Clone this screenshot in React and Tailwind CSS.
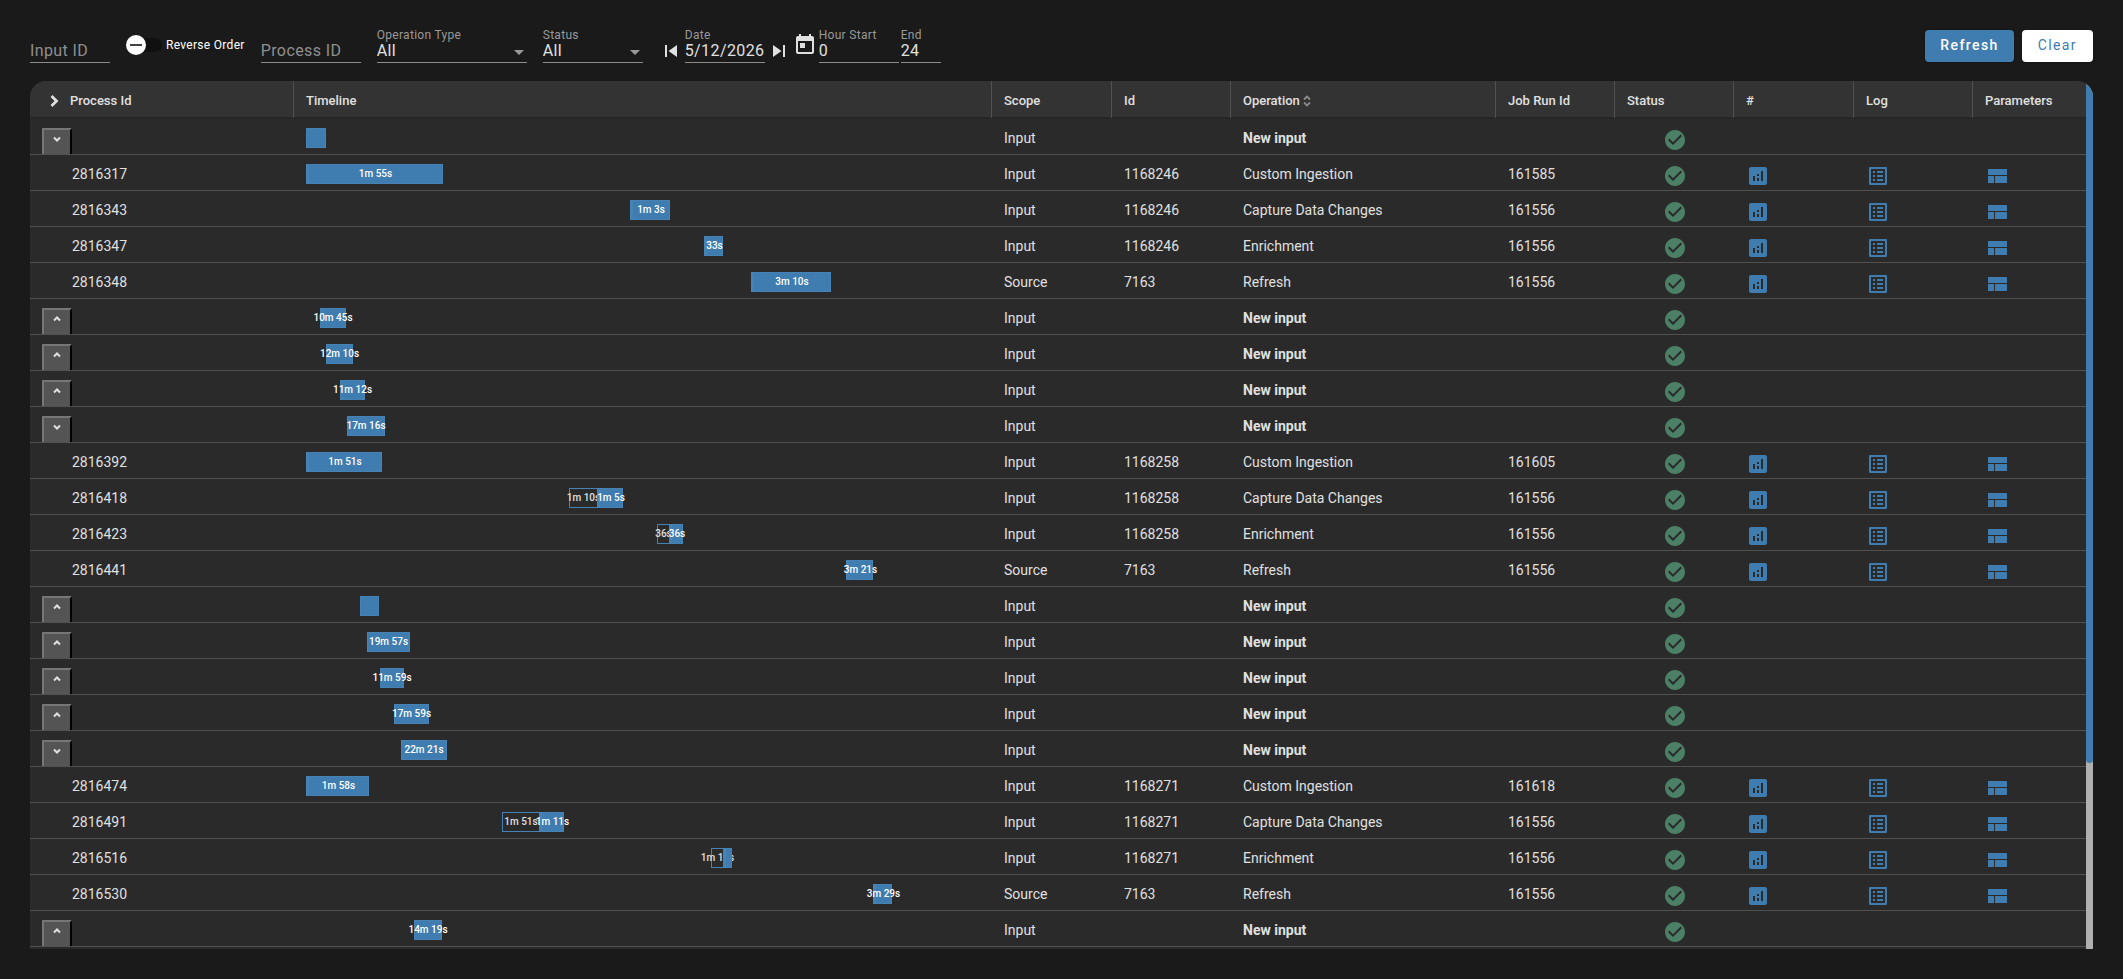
// Components/Monitoring/ProcessTimeline.jsx
'use client'

import { useState } from 'react'
import { MdAnalytics, MdCheckCircle, MdListAlt, MdSkipNext, MdSkipPrevious, MdToday } from 'react-icons/md'

// Length of the timeline axis, in the same units as bar gap and size
const AXIS = 674

const wait = (gap, size, label) => ({ kind: 'wait', gap, size, label })
const run = (gap, size, label) => ({ kind: 'run', gap, size, label })

const group = (open, gap, size, label) => ({
  group: true,
  open,
  scope: 'Input',
  operation: 'New input',
  bars: [{ kind: 'total', gap, size, label }],
})

const proc = (pid, scope, id, operation, job, ...bars) => ({ pid, scope, id, operation, job, bars })

const ROWS = [
  group(true, 0, 20, ''),
  proc(2816317, 'Input', 1168246, 'Custom Ingestion', 161585, run(0, 137, '1m 55s')),
  proc(2816343, 'Input', 1168246, 'Capture Data Changes', 161556, run(324, 40, '1m 3s')),
  proc(2816347, 'Input', 1168246, 'Enrichment', 161556, run(398, 19, '33s')),
  proc(2816348, 'Source', 7163, 'Refresh', 161556, run(445, 80, '3m 10s')),
  group(false, 14, 26, '10m 45s'),
  group(false, 20, 27, '12m 10s'),
  group(false, 34, 25, '11m 12s'),
  group(true, 41, 38, '17m 16s'),
  proc(2816392, 'Input', 1168258, 'Custom Ingestion', 161605, run(0, 76, '1m 51s')),
  proc(2816418, 'Input', 1168258, 'Capture Data Changes', 161556, wait(263, 28, '1m 10s'), run(0, 26, '1m 5s')),
  proc(2816423, 'Input', 1168258, 'Enrichment', 161556, wait(351, 12, '36s'), run(0, 14, '36s')),
  proc(2816441, 'Source', 7163, 'Refresh', 161556, run(540, 27, '3m 21s')),
  group(false, 54, 19, ''),
  group(false, 61, 43, '19m 57s'),
  group(false, 74, 24, '11m 59s'),
  group(false, 88, 35, '17m 59s'),
  group(true, 95, 46, '22m 21s'),
  proc(2816474, 'Input', 1168271, 'Custom Ingestion', 161618, run(0, 63, '1m 58s')),
  proc(2816491, 'Input', 1168271, 'Capture Data Changes', 161556, wait(196, 37, '1m 51s'), run(0, 25, '1m 11s')),
  proc(2816516, 'Input', 1168271, 'Enrichment', 161556, wait(405, 12, '1m 13s'), run(0, 9, '')),
  proc(2816530, 'Source', 7163, 'Refresh', 161556, run(567, 19, '3m 29s')),
  group(false, 108, 28, '14m 19s'),
]

const BAR_STYLES = {
  total: 'border border-[#4682b4] bg-[#3f7cb0] text-white',
  run: 'border border-l-3 border-[#4682b4] bg-[#3f7cb0] text-white',
  wait: 'border border-r-0 border-[#4682b4] text-[#e0e0e0]',
}

const TH = 'h-[38px] border-b-2 border-[#262626] border-r border-r-[#515151] px-3 pt-1 text-left text-[13px] leading-5 font-medium last:border-r-0'
const TD = 'h-9 border-b border-[#515151] px-3 pt-[9px] align-top leading-5'

export default function App() {
  const [operationType, setOperationType] = useState('All')
  const [status, setStatus] = useState('All')
  const [reverse, setReverse] = useState(false)

  return (
    <div className="min-h-screen bg-[#1a1a1a] px-[30px] pt-[29px] pb-[30px] font-[Roboto,sans-serif] text-sm text-[#e0e0e0]">
      <form className="flex items-end gap-4" onSubmit={(e) => e.preventDefault()}>
        <Field id="input-id" className="w-20" placeholder="Input ID" />

        <label className="mb-2 flex h-5 cursor-pointer items-center gap-1">
          <input
            type="checkbox"
            role="switch"
            checked={reverse}
            onChange={(e) => setReverse(e.target.checked)}
            className="peer sr-only"
          />
          <span className="flex h-3.5 w-9 items-center rounded-full bg-[#101010] peer-checked:justify-end">
            <span className="flex h-5 w-5 shrink-0 items-center justify-center rounded-full bg-white">
              <span className="h-0.5 w-3 bg-[#424242]" />
            </span>
          </span>
          <span className="text-xs leading-5 tracking-wide text-white">Reverse Order</span>
        </label>

        <Field id="process-id" className="w-[100px]" placeholder="Process ID" />

        <SelectField
          id="operation-type"
          label="Operation Type"
          className="w-[150px]"
          value={operationType}
          onChange={setOperationType}
          options={['All', 'Custom Ingestion', 'Capture Data Changes', 'Enrichment', 'Refresh']}
        />
        <SelectField
          id="status"
          label="Status"
          className="w-[100px]"
          value={status}
          onChange={setStatus}
          options={['All', 'Passed', 'Failed']}
        />

        <div className="flex items-end gap-0.5">
          <button type="button" aria-label="Previous day">
            <MdSkipPrevious className="h-6 w-6" />
          </button>
          <Field id="date" label="Date" className="w-20" defaultValue="5/12/2026" />
          <button type="button" aria-label="Next day">
            <MdSkipNext className="h-6 w-6" />
          </button>
          <button type="button" aria-label="Open calendar" className="mb-1.5">
            <MdToday className="h-6 w-6" />
          </button>
          <Field id="hour-start" label="Hour Start" className="w-20" defaultValue="0" />
          <Field id="hour-end" label="End" className="w-10" defaultValue="24" />
        </div>

        <div className="mb-px ml-auto flex gap-2">
          <button
            type="submit"
            className="h-8 rounded bg-[#3f7cb0] px-[15px] pb-0.5 text-sm font-medium tracking-widest text-white shadow"
          >
            Refresh
          </button>
          <button
            type="reset"
            className="h-8 rounded bg-white px-4 pb-0.5 text-sm tracking-widest text-[#3f7cb0] shadow"
          >
            Clear
          </button>
        </div>
      </form>

      <div className="mt-[18px] flex overflow-hidden rounded-t-2xl bg-[#2a2a2a]">
        <div className="min-w-0 flex-1 pb-0.5">
          <table className="w-full table-fixed border-separate border-spacing-0">
            <colgroup>
              <col className="w-[264px]" />
              <col />
              <col className="w-[120px]" />
              <col className="w-[119px]" />
              <col className="w-[265px]" />
              <col className="w-[119px]" />
              <col className="w-[119px]" />
              <col className="w-[120px]" />
              <col className="w-[119px]" />
              <col className="w-[113px]" />
            </colgroup>
            <thead className="bg-[#333333]">
              <tr>
                <th className={TH}>
                  <span className="flex items-center gap-1">
                    <button type="button" aria-label="Expand all">
                      <RightIcon className="h-6 w-6" />
                    </button>
                    Process Id
                  </span>
                </th>
                <th className={TH}>Timeline</th>
                <th className={TH}>Scope</th>
                <th className={TH}>Id</th>
                <th className={TH}>
                  <span className="flex items-center gap-[3px]">
                    Operation
                    <SortIcon className="h-3 w-2 text-[#8a8a8a]" />
                  </span>
                </th>
                <th className={TH}>Job Run Id</th>
                <th className={TH}>Status</th>
                <th className={TH}>#</th>
                <th className={TH}>Log</th>
                <th className={TH}>Parameters</th>
              </tr>
            </thead>
            <tbody>
              {ROWS.map((row, i) => (
                <Row key={i} row={row} />
              ))}
            </tbody>
          </table>
        </div>

        {/* Scroll track */}
        <div className="w-[7px] bg-[#b0b0b0]">
          <div className="h-11/14 rounded-full bg-[#3f7cb0]" />
        </div>
      </div>
    </div>
  )
}

function Row({ row }) {
  return (
    <tr>
      {row.group ? (
        <td className={TD}>
          <button
            type="button"
            aria-label={row.open ? 'Collapse' : 'Expand'}
            className="flex h-[26px] w-[30px] items-start justify-center border-2 border-b-0 border-t-[#767676] border-r-black border-l-[#767676] bg-[#545454] pt-px"
          >
            {row.open ? <DownIcon className="h-4 w-4" /> : <UpIcon className="h-4 w-4" />}
          </button>
        </td>
      ) : (
        <td className={TD}>
          <span className="pl-[30px]">{row.pid}</span>
        </td>
      )}
      <td className={TD}>
        <div className="flex">
          {row.bars.map((bar, i) => (
            <div
              key={i}
              className={`flex h-5 shrink-0 items-center justify-center text-[10px] leading-3 font-medium whitespace-nowrap ${BAR_STYLES[bar.kind]}`}
              style={{ marginLeft: `${(bar.gap / AXIS) * 100}%`, width: `${(bar.size / AXIS) * 100}%` }}
            >
              {bar.label}
            </div>
          ))}
        </div>
      </td>
      <td className={TD}>{row.scope}</td>
      <td className={TD}>{row.id}</td>
      <td className={`${TD} ${row.group ? 'font-bold' : ''}`}>{row.operation}</td>
      <td className={TD}>{row.job}</td>
      <td className={TD}>
        <MdCheckCircle className="mx-auto h-6 w-6 text-[#4b8067]" />
      </td>
      <td className={TD}>
        {!row.group && (
          <button type="button" aria-label="Metrics" className="block text-[#3f7cb0]">
            <MdAnalytics className="h-6 w-6" />
          </button>
        )}
      </td>
      <td className={TD}>
        {!row.group && (
          <button type="button" aria-label="Log" className="block text-[#3f7cb0]">
            <MdListAlt className="h-6 w-6" />
          </button>
        )}
      </td>
      <td className={TD}>
        {!row.group && (
          <button type="button" aria-label="Parameters" className="block text-[#3f7cb0]">
            <LayoutIcon className="h-6 w-6" />
          </button>
        )}
      </td>
    </tr>
  )
}

function Field({ id, label, className, ...props }) {
  return (
    <div className={`flex flex-col ${className}`}>
      {label ? (
        <label htmlFor={id} className="text-xs leading-3 tracking-wide whitespace-nowrap text-[#999999]">
          {label}
        </label>
      ) : null}
      <input
        id={id}
        type="text"
        aria-label={label ? undefined : props.placeholder}
        className="h-[22px] w-full border-b border-[#8c8c8c] bg-transparent pb-0.5 text-base leading-5 tracking-wide text-[#e0e0e0] placeholder-[#8f8f8f] outline-none"
        {...props}
      />
    </div>
  )
}

function SelectField({ id, label, className, value, onChange, options }) {
  return (
    <div className={`relative flex flex-col ${className}`}>
      <label htmlFor={id} className="text-xs leading-3 tracking-wide whitespace-nowrap text-[#999999]">
        {label}
      </label>
      <select
        id={id}
        value={value}
        onChange={(e) => onChange(e.target.value)}
        className="h-[22px] w-full appearance-none border-b border-[#8c8c8c] bg-transparent pb-0.5 text-base leading-5 tracking-wide text-[#e0e0e0] outline-none"
      >
        {options.map((o) => (
          <option key={o}>{o}</option>
        ))}
      </select>
      <svg className="pointer-events-none absolute right-[3px] bottom-2 h-[5px] w-2.5 text-[#999999]" viewBox="0 0 10 5" fill="currentColor">
        <path d="M0 0h10L5 5z" />
      </svg>
    </div>
  )
}

function RightIcon({ className }) {
  return (
    <svg className={className} viewBox="0 0 24 24" fill="none" stroke="currentColor" strokeWidth={2.8}>
      <path d="M9.5 7l5 5-5 5" />
    </svg>
  )
}

function DownIcon({ className }) {
  return (
    <svg className={className} viewBox="0 0 16 16" fill="none" stroke="currentColor" strokeWidth={2}>
      <path d="M5 6.5l3 3 3-3" />
    </svg>
  )
}

function UpIcon({ className }) {
  return (
    <svg className={className} viewBox="0 0 16 16" fill="none" stroke="currentColor" strokeWidth={2}>
      <path d="M5 9.5l3-3 3 3" />
    </svg>
  )
}

function SortIcon({ className }) {
  return (
    <svg className={className} viewBox="0 0 8 12" fill="none" stroke="currentColor" strokeWidth={1.8}>
      <path d="M1 4.5l3-3 3 3M1 7.5l3 3 3-3" />
    </svg>
  )
}

function LayoutIcon({ className }) {
  return (
    <svg className={className} viewBox="0 0 24 24" fill="currentColor">
      <path d="M3 19h6v-7H3v7zm7 0h12v-7H10v7zM3 5v6h19V5H3z" />
    </svg>
  )
}
